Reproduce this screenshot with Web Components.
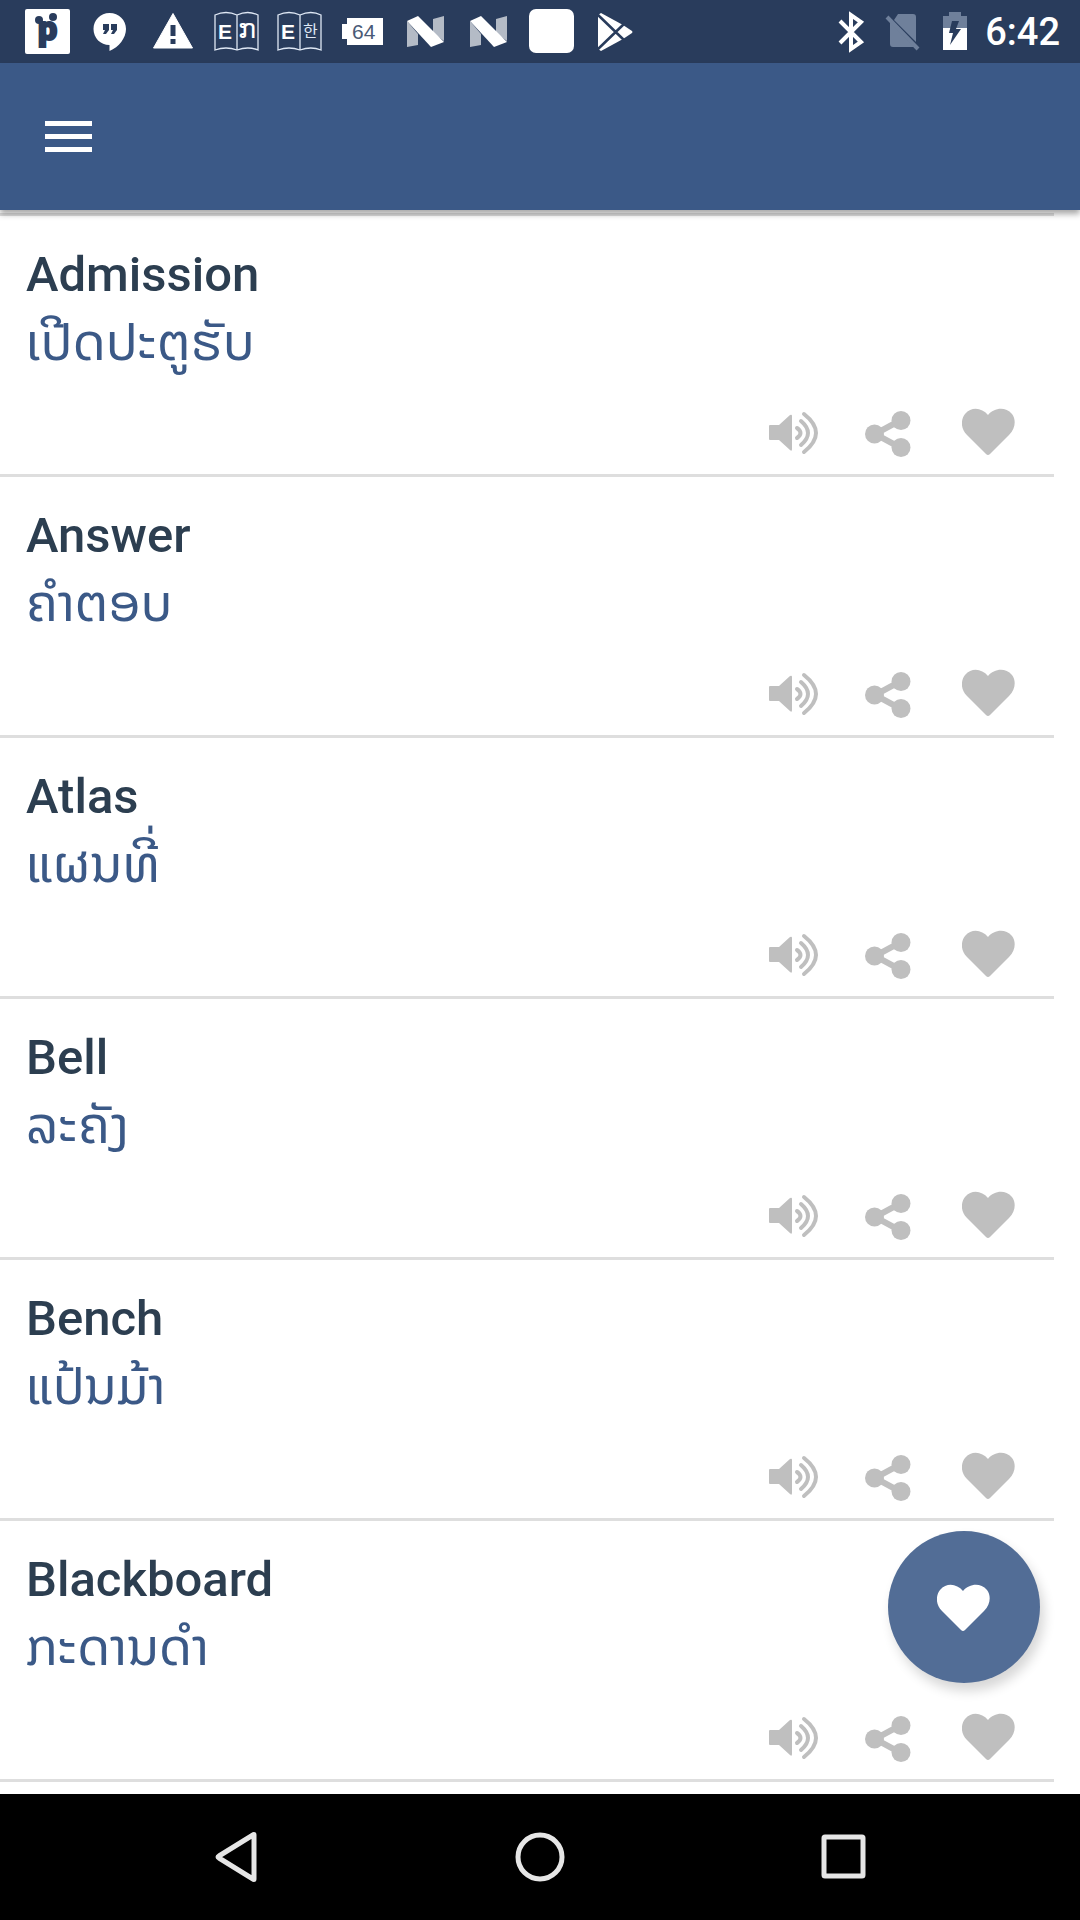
<!DOCTYPE html>
<html lang="en">
<head>
<meta charset="utf-8">
<meta name="viewport" content="width=device-width, initial-scale=1">
<title>Dictionary</title>
<style>
  body {
    --status: #293c5c;
    --primary: #3b5987;
    --fab: #526d96;
    --title: #2c3e50;
    --muted: #bfbfbf;
    --line: #dedede;
    margin: 0;
    background: #fff;
    font-family: Roboto, "DejaVu Sans", sans-serif;
  }
</style>
</head>
<body>
  <app-shell>
    <status-bar slot="top" time="6:42"></status-bar>
    <app-header slot="top"></app-header>
    <word-card><h2 slot="word">Admission</h2><span slot="meaning" lang="lo">ເປີດປະຕູຮັບ</span></word-card>
    <word-card><h2 slot="word">Answer</h2><span slot="meaning" lang="lo">ຄຳຕອບ</span></word-card>
    <word-card><h2 slot="word">Atlas</h2><span slot="meaning" lang="lo">ແຜນທີ່</span></word-card>
    <word-card><h2 slot="word">Bell</h2><span slot="meaning" lang="lo">ລະຄັງ</span></word-card>
    <word-card><h2 slot="word">Bench</h2><span slot="meaning" lang="lo">ແປ້ນມ້າ</span></word-card>
    <word-card><h2 slot="word">Blackboard</h2><span slot="meaning" lang="lo">ກະດານດຳ</span></word-card>
    <fab-button slot="fab" label="Favourites"></fab-button>
    <nav-bar slot="bottom"></nav-bar>
  </app-shell>

<script>
const book = letter => `
  <path d="M1 6Q12 1 23 6Q34 1 44 6V41Q34 37 23 41Q12 37 1 41ZM23 6V41" fill="none" stroke="#dfe8f5" stroke-width="1.3"/>
  <text x="4" y="30" font-family="Liberation Sans, sans-serif" font-weight="700" font-size="21" fill="#fff">E</text>
  ${letter}`

const nougat = `
  <path d="M4 12L15 25V36L4 38Z M30 10L41 7V32L30 24Z" fill="#fff" opacity=".65"/>
  <path d="M4 12L15 7L41 33L28 38Z" fill="#fff"/>`

// each entry: [viewBox width, viewBox height, markup]
const ICONS = {
  logo: [45, 45, `
    <rect width="45" height="45" rx="2" fill="#fff"/>
    <text x="13" y="31" font-family="Roboto, sans-serif" font-weight="900" font-size="34" fill="#293c5c" stroke="#293c5c" stroke-width="2">p</text>
    <circle cx="14" cy="11" r="4" fill="#293c5c"/><circle cx="28" cy="8" r="4" fill="#293c5c"/>`],
  chat: [45, 45, `
    <path d="M21.500 4C12.500 4 5.500 11 5.500 20C5.500 29 12.500 36 21.500 36V42C31 38 38 29 38 20C38 11 31 4 21.500 4Z" fill="#fff"/>
    <path d="M15 15h6v6l-3 4h-3l2-4h-2zM23 15h6v6l-3 4h-3l2-4h-2z" fill="#293c5c"/>`],
  warning: [45, 45, `
    <path d="M22 4.500L41.500 39H2.500Z" fill="#fff" stroke="#fff" stroke-linejoin="round"/>
    <path d="M19.500 16h5v11h-5zM19.500 30h5v5h-5z" fill="#293c5c"/>`],
  bookLao: [45, 45, book('<text x="24" y="29" font-family="DejaVu Sans, sans-serif" font-size="27" fill="#fff">ກ</text>')],
  bookKorean: [45, 45, book('<text x="26" y="28" font-family="Noto Sans CJK KR, sans-serif" font-size="16" fill="#dfe8f5">한</text>')],
  battery64: [45, 45, `
    <path d="M7 9H43V36H7V30H2V15H7Z" fill="#fff"/>
    <text x="12" y="30" font-family="Liberation Sans, sans-serif" font-size="21" fill="#4a5a76">64</text>`],
  nougat: [45, 45, nougat],
  blank: [45, 45, '<rect width="45" height="44" rx="7" fill="#fff"/>'],
  play: [45, 45, `
    <path d="M6 6L9 4L31 16L40 22Q41 23 40 24L31 30L9 42L6 40Z" fill="#fff"/>
    <path d="M5 5L33 32M5 41L33 14" stroke="#293c5c" stroke-width="2.500"/>`],
  bluetooth: [36, 45, '<path d="M7 12L28 33L18 40V6L28 13L7 34" fill="none" stroke="#fff" stroke-width="4"/>'],
  noSim: [36, 45, `
    <path d="M13 5H28Q31 5 31 8V33L9 11ZM5 13L29 38H8Q5 38 5 35Z" fill="#6f809b"/>
    <path d="M2 8L33 40" stroke="#6f809b" stroke-width="4"/>`],
  charging: [32, 45, `
    <path d="M6 7H12V3H24V7H30V19H6Z" fill="#6f809b"/>
    <path d="M6 19H30V41H6Z" fill="#fff"/>
    <path d="M15 12H22L19 20H24L13 36L16 24H12Z" fill="#293c5c"/>`],
  menu: [48, 32, '<path d="M0 0H47V5H0ZM0 13H47V18H0ZM0 26H47V31H0Z" fill="#fff"/>'],
  speaker: [54, 54, `
    <path d="M3 22Q3 21 4 21H13L24 11Q26 10 26 12V45Q26 48 24 46L13 36H4Q3 36 3 35Z" fill="currentColor"/>
    <path d="M31 24Q38 29 31 34M35 17Q49 29 35 41M38 10Q62 29 38 48" fill="none" stroke="currentColor" stroke-width="4" stroke-linecap="round"/>`],
  share: [54, 54, `
    <path d="M37 16L11 30L37 44" fill="none" stroke="currentColor" stroke-width="6"/>
    <circle cx="10.500" cy="30" r="9.500" fill="currentColor"/><circle cx="37" cy="16.500" r="9.500" fill="currentColor"/><circle cx="37" cy="43.500" r="9.500" fill="currentColor"/>`],
  heart: [54, 54, '<path d="M24 50L5 31C-2 24-1 15 3 10C10 2 20 4 26 11C32 4 43 2 50 10C54 15 54 24 47 31L28 50Q26 52 24 50Z" fill="currentColor"/>'],
  back: [50, 50, '<path d="M43 3V47Q43 48 42 47L8 26Q6 25 8 24L42 3Q43 2 43 3Z" fill="none" stroke="#e6e6e6" stroke-width="5"/>'],
  home: [50, 50, '<circle cx="25" cy="25" r="22" fill="none" stroke="#e6e6e6" stroke-width="5"/>'],
  recent: [50, 50, '<rect x="5" y="5" width="39" height="39" rx="1" fill="none" stroke="#e6e6e6" stroke-width="5"/>'],
}

class UiIcon extends HTMLElement {
  connectedCallback() {
    const [w, h, body] = ICONS[this.getAttribute('name')]
    this.attachShadow({ mode: 'open' }).innerHTML = `
      <style>
        :host { display: block; flex: none; }
        svg { display: block; }
      </style>
      <svg width="${w}" height="${h}" viewBox="0 0 ${w} ${h}" aria-hidden="true">${body}</svg>
    `
  }
}

class AppShell extends HTMLElement {
  constructor() {
    super()
    this.attachShadow({ mode: 'open' }).innerHTML = `
      <style>
        :host {
          display: flex;
          flex-direction: column;
          min-height: 100vh;
        }
        main {
          position: relative;
          flex: 1;
        }
        .list {
          padding: 3px 26px 12px 0;
        }
        .list::before {
          content: "";
          display: block;
          height: 3px;
          background: var(--line);
        }
        .fab {
          position: absolute;
          right: 40px;
          bottom: 111px;
        }
      </style>
      <slot name="top"></slot>
      <main>
        <div class="list"><slot></slot></div>
        <div class="fab"><slot name="fab"></slot></div>
      </main>
      <slot name="bottom"></slot>
    `
  }
}

class StatusBar extends HTMLElement {
  connectedCallback() {
    const left = ['logo', 'chat', 'warning', 'bookLao', 'bookKorean', 'battery64', 'nougat', 'nougat', 'blank', 'play']
    const right = ['bluetooth', 'noSim', 'charging']
    const icons = names => names.map(n => `<ui-icon name="${n}"></ui-icon>`).join('')

    this.attachShadow({ mode: 'open' }).innerHTML = `
      <style>
        :host {
          display: flex;
          justify-content: space-between;
          align-items: center;
          height: 63px;
          padding: 0 20px 0 25px;
          background: var(--status);
          color: #fff;
        }
        div {
          display: flex;
          align-items: center;
        }
        .left { gap: 18px; }
        .right { gap: 16px; }
        time {
          font-size: 38px;
          font-weight: 500;
          line-height: 60px;
        }
      </style>
      <div class="left">${icons(left)}</div>
      <div class="right">${icons(right)}<time>${this.getAttribute('time')}</time></div>
    `
  }
}

class AppHeader extends HTMLElement {
  constructor() {
    super()
    this.attachShadow({ mode: 'open' }).innerHTML = `
      <style>
        :host {
          position: relative;
          z-index: 1;
          display: flex;
          align-items: center;
          height: 147px;
          padding: 0 45px;
          background: var(--primary);
          box-shadow: 0 4px 6px rgba(0, 0, 0, .35);
        }
        button {
          padding: 0;
          border: 0;
          background: none;
        }
      </style>
      <button type="button" aria-label="Menu"><ui-icon name="menu"></ui-icon></button>
    `
  }
}

class WordCard extends HTMLElement {
  constructor() {
    super()
    this.attachShadow({ mode: 'open' }).innerHTML = `
      <style>
        :host {
          display: block;
          border-bottom: 3px solid var(--line);
        }
        article {
          display: flex;
          flex-direction: column;
          box-sizing: border-box;
          min-height: 258px;
          padding: 28px 38px 16px 26px;
        }
        ::slotted([slot="word"]) {
          margin: 0;
          color: var(--title);
          font-size: 49px;
          font-weight: 500;
          line-height: 62px;
        }
        ::slotted([slot="meaning"]) {
          color: var(--primary);
          font-family: "Noto Sans Lao", "DejaVu Sans", sans-serif;
          font-size: 52px;
          line-height: 70px;
        }
        .actions {
          display: flex;
          justify-content: flex-end;
          gap: 44px;
          margin-top: auto;
        }
        button {
          padding: 0;
          border: 0;
          background: none;
          color: var(--muted);
        }
      </style>
      <article>
        <slot name="word"></slot>
        <slot name="meaning"></slot>
        <div class="actions">
          <button type="button" aria-label="Listen"><ui-icon name="speaker"></ui-icon></button>
          <button type="button" aria-label="Share"><ui-icon name="share"></ui-icon></button>
          <button type="button" aria-label="Favourite"><ui-icon name="heart"></ui-icon></button>
        </div>
      </article>
    `
  }
}

class FabButton extends HTMLElement {
  connectedCallback() {
    this.attachShadow({ mode: 'open' }).innerHTML = `
      <style>
        :host { display: block; }
        button {
          display: grid;
          place-items: center;
          width: 152px;
          height: 152px;
          padding: 0;
          border: 0;
          border-radius: 50%;
          background: var(--fab);
          color: #fff;
          box-shadow: 4px 8px 12px rgba(0, 0, 0, .16);
        }
      </style>
      <button type="button" aria-label="${this.getAttribute('label')}"><ui-icon name="heart"></ui-icon></button>
    `
  }
}

class NavBar extends HTMLElement {
  constructor() {
    super()
    this.attachShadow({ mode: 'open' }).innerHTML = `
      <style>
        :host { display: block; }
        nav {
          display: flex;
          justify-content: center;
          align-items: center;
          gap: 254px;
          height: 126px;
          background: #000;
        }
        button {
          padding: 0;
          border: 0;
          background: none;
        }
      </style>
      <nav aria-label="System navigation">
        <button type="button" aria-label="Back"><ui-icon name="back"></ui-icon></button>
        <button type="button" aria-label="Home"><ui-icon name="home"></ui-icon></button>
        <button type="button" aria-label="Recent apps"><ui-icon name="recent"></ui-icon></button>
      </nav>
    `
  }
}

customElements.define('ui-icon', UiIcon)
customElements.define('app-shell', AppShell)
customElements.define('status-bar', StatusBar)
customElements.define('app-header', AppHeader)
customElements.define('word-card', WordCard)
customElements.define('fab-button', FabButton)
customElements.define('nav-bar', NavBar)
</script>
</body>
</html>
